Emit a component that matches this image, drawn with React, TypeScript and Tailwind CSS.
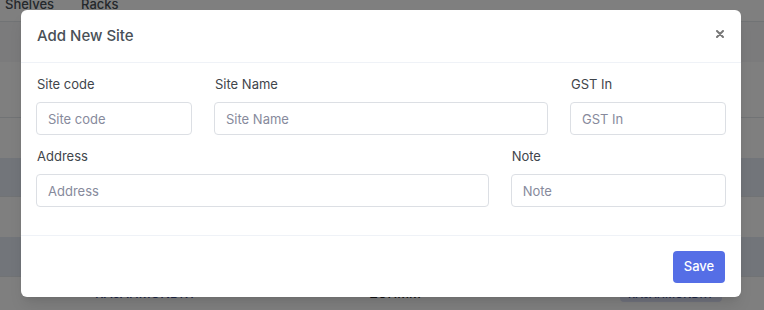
import React from "react";

const font = { fontFamily: 'Inter, "Open Sans", sans-serif' };

function Field({ label, span }: { label: string; span: string }) {
  return (
    <div className={span}>
      <label className="block text-[13px] leading-5 font-normal text-[#3f454b] mb-2 pl-px">{label}</label>
      <input
        placeholder={label}
        className="block w-full h-[33px] border border-[#dcdfe4] rounded-[4px] px-[11px] text-[13px] text-[#495057] placeholder:text-[#878a9c] outline-none"
      />
    </div>
  );
}

export default function App() {
  return (
    <div className="relative w-[764px] h-[310px] overflow-hidden bg-white" style={font}>
      {/* page behind the dialog */}
      <div className="flex flex-col">
        <div className="h-[22px] flex gap-[27px] pl-[5px] border-b border-[#e3e6eb] text-[13px] text-[#495057] font-medium">
          <span className="-mt-[5px]">Shelves</span>
          <span className="-mt-[5px]">Racks</span>
        </div>
        <div className="h-[40px] bg-[#f6f7f8]" />
        <div className="h-[56px] border-b border-[#e3e6eb]" />
        <div className="h-[40px]" />
        <div className="h-[39px] bg-[#e4eaf4] border-b border-[#e3e6eb]" />
        <div className="h-[40px]" />
        <div className="h-[40px] bg-[#e4eaf4] border-b border-[#e3e6eb]" />
        <div className="h-[40px] flex items-center text-[13px] font-medium text-[#3b4a8f] pb-[6px]">
          <span className="ml-[95px]">RAJAHMUNDRY</span>
          <span className="ml-[173px] text-[#222]">ZOHMM</span>
          <span className="ml-auto mr-[42px] px-2 rounded bg-[#dfe3f8] text-[11px]">RAJAHMUNDRY</span>
        </div>
      </div>

      {/* backdrop */}
      <div className="absolute inset-0 bg-black/50" />

      {/* dialog */}
      <div className="absolute left-[21px] top-[10px] w-[720px] bg-white rounded-md shadow-lg">
        <div className="h-[53px] flex items-center justify-between pl-4 pr-[17px] border-b border-[#eff2f7]">
          <h5 className="text-[15px] font-medium text-[#495057]">Add New Site</h5>
          <button className="w-2 h-2 -mt-[5px] flex items-center justify-center" aria-label="Close">
            <svg width="8" height="8" viewBox="0 0 8 8">
              <path d="M1 1L7 7M7 1L1 7" stroke="#777" strokeWidth="2" strokeLinecap="round" />
            </svg>
          </button>
        </div>

        <div className="pl-[15px] pr-[15px] pt-[11px] pb-[28px] grid grid-cols-12 gap-x-[22px] gap-y-[11px]">
          <Field label="Site code" span="col-span-3" />
          <Field label="Site Name" span="col-span-6" />
          <Field label="GST In" span="col-span-3" />
          <Field label="Address" span="col-span-8" />
          <Field label="Note" span="col-span-4" />
        </div>

        <div className="border-t border-[#eff2f7] flex justify-end pt-[15px] pb-[14px] pr-4">
          <button className="w-[52px] h-[32px] rounded-[4px] bg-[#556ee6] text-white text-[13px] font-medium">Save</button>
        </div>
      </div>
    </div>
  );
}
